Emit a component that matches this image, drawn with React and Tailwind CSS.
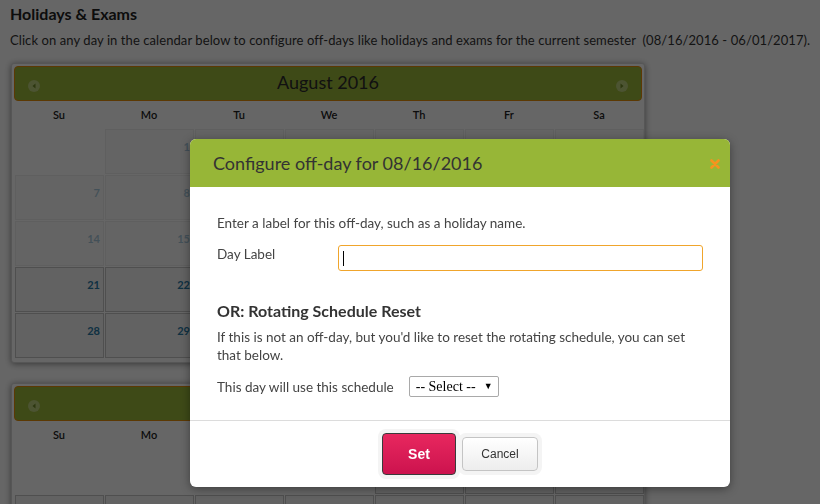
import React from "react";

const WEEKDAYS = ["Su", "Mo", "Tu", "We", "Th", "Fr", "Sa"];

// build weeks for a month, offset = weekday of the 1st
const buildWeeks = (offset, days) => {
  const cells = [];
  for (let i = 0; i < offset; i++) cells.push(null);
  for (let d = 1; d <= days; d++) cells.push(d);
  while (cells.length % 7 !== 0) cells.push(null);
  const weeks = [];
  for (let i = 0; i < cells.length; i += 7) weeks.push(cells.slice(i, i + 7));
  return weeks;
};

const NavCircle = ({ dir }) => (
  <div className="mt-[13px] flex h-[12px] w-[12px] items-center justify-center rounded-full bg-white/35">
    <svg width="6" height="6" viewBox="0 0 6 6">
      {dir === "prev" ? (
        <path d="M4.5 0.5 L1.5 3 L4.5 5.5 Z" fill="#6f8a26" />
      ) : (
        <path d="M1.5 0.5 L4.5 3 L1.5 5.5 Z" fill="#6f8a26" />
      )}
    </svg>
  </div>
);

const Calendar = ({ title, offset, days, firstActive }) => {
  const weeks = buildWeeks(offset, days);
  return (
    <div className="ml-[1px] w-[634px] rounded-[3px] border border-[#d8d8d8] bg-white p-[2px] pb-[4px] shadow-[0_1px_6px_rgba(0,0,0,0.45)]">
      <div className="flex h-[35px] items-start rounded-[4px] border border-[#e78f08] bg-[#9bb83a] px-[13px]">
        <NavCircle dir="prev" />
        <div className="flex-1 pt-[3px] text-center text-[18px] leading-[24px] text-[#2b2b2b]">
          {title}
        </div>
        <NavCircle dir="next" />
      </div>
      <div className="grid grid-cols-[repeat(7,90px)]">
        {WEEKDAYS.map((d) => (
          <div
            key={d}
            className="h-[28px] text-center text-[11px] font-semibold leading-[28px] text-[#222]"
          >
            {d}
          </div>
        ))}
      </div>
      <div className="grid grid-cols-[repeat(7,89px)] gap-[1px] pl-[1px]">
        {weeks.flat().map((d, i) =>
          d === null ? (
            <div key={i} className="h-[45px]" />
          ) : (
            <div
              key={i}
              className={
                d < firstActive
                  ? "h-[45px] border border-[#d3d3d3] bg-[#f6f6f6] px-[3px] pt-[3px] text-right opacity-40"
                  : "h-[45px] border border-[#c5c5c5] bg-[#f6f6f6] px-[3px] pt-[3px] text-right"
              }
            >
              <span className="text-[11px] font-bold leading-[13px] text-[#2a7aa6]">{d}</span>
            </div>
          )
        )}
      </div>
    </div>
  );
};

export default function App() {
  return (
    <div className="relative min-h-screen bg-white font-['Lato',sans-serif]">
      <div className="px-[10px] pt-[4px]">
        <h2 className="text-[16px] font-bold leading-[20px] text-[#222]">Holidays &amp; Exams</h2>
        <p className="mt-[6px] whitespace-nowrap text-[13px] leading-[20px] tracking-[0.08px] text-[#333]">
          Click on any day in the calendar below to configure off-days like holidays and exams for
          the current semester&nbsp; (08/16/2016 - 06/01/2017).
        </p>
        <div className="mt-[13px] flex flex-col gap-[20px]">
          <Calendar title="August 2016" offset={1} days={31} firstActive={16} />
          <Calendar title="September 2016" offset={4} days={30} firstActive={0} />
        </div>
      </div>

      {/* dim overlay */}
      <div className="fixed inset-0 bg-black/60" />

      {/* dialog */}
      <div className="absolute left-[190px] top-[139px] w-[540px] rounded-[6px] bg-white shadow-[0_2px_10px_rgba(0,0,0,0.4)]">
        <div className="flex h-[48px] items-center justify-between rounded-t-[6px] bg-[#97b637] pl-[23px] pr-[10px]">
          <h3 className="text-[18px] leading-[24px] text-[#333]">Configure off-day for 08/16/2016</h3>
          <svg width="10" height="10" viewBox="0 0 10 10" className="mt-[2px]">
            <path d="M1.5 1.5 L8.5 8.5 M8.5 1.5 L1.5 8.5" stroke="#f7931e" strokeWidth="2.6" strokeLinecap="round" />
          </svg>
        </div>

        <div className="px-[27px] pb-[23px] pt-[27px] text-[13.5px] text-[#444]">
          <p className="leading-[18px]">Enter a label for this off-day, such as a holiday name.</p>
          <div className="mt-[13px] flex items-start">
            <label className="w-[121px] leading-[18px]">Day Label</label>
            <div className="flex h-[26px] flex-1 items-center rounded-[3px] border border-[#f0a52c] bg-white px-[4px]">
              <span className="h-[15px] w-[1px] bg-black" />
            </div>
          </div>

          <h4 className="mt-[30px] text-[16px] font-bold leading-[20px] text-[#333]">
            OR: Rotating Schedule Reset
          </h4>
          <p className="mt-[7px] leading-[18px]">
            If this is not an off-day, but you'd like to reset the rotating schedule, you can set
            that below.
          </p>
          <div className="mt-[12px] flex items-center">
            <span className="leading-[18px]">This day will use this schedule</span>
            <div className="ml-[15px] flex h-[21px] w-[90px] items-center justify-between rounded-[2px] border border-[#a9a9a9] bg-white pl-[6px] pr-[5px] font-['Liberation_Serif',serif] text-[14px] text-black">
              <span>-- Select --</span>
              <span className="text-[9px]">▼</span>
            </div>
          </div>
        </div>

        <div className="flex h-[67px] items-center justify-center gap-[6px] border-t border-[#dcdcdc] font-['Liberation_Sans',sans-serif]">
          <button className="h-[42px] w-[74px] rounded-[4px] border border-[#3a3a3a] bg-gradient-to-b from-[#e8275f] to-[#cc124e] text-[14px] font-bold text-white ring-4 ring-[#f4f4f4]">
            Set
          </button>
          <button className="h-[34px] w-[76px] rounded-[4px] border border-[#c4c4c4] bg-gradient-to-b from-white to-[#ededed] text-[12px] text-[#333] ring-4 ring-[#f4f4f4]">
            Cancel
          </button>
        </div>
      </div>
    </div>
  );
}
